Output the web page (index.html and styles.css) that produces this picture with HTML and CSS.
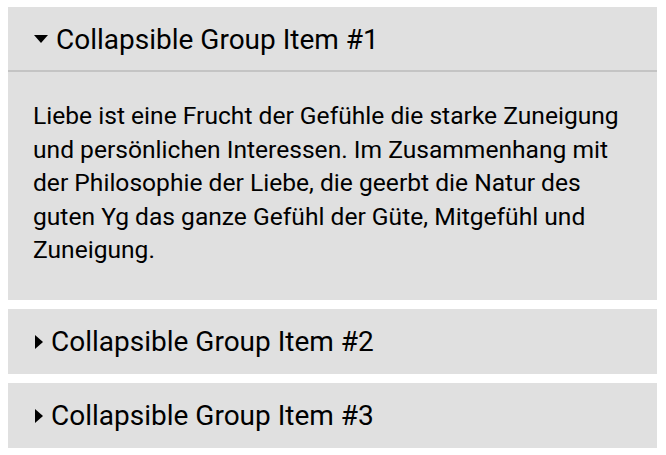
FILE: index.html
```html
<!DOCTYPE html>
<html>
<head>
<meta charset="utf-8">
<link rel="stylesheet" href="styles.css">
</head>
<body>
<div class="set">
  <div class="item open">
    <div class="head"><span class="tri down"></span>Collapsible Group Item #1</div>
    <div class="body">Liebe ist eine Frucht der Gefühle die starke Zuneigung und persönlichen Interessen. Im Zusammenhang mit der Philosophie der Liebe, die geerbt die Natur des guten Yg das ganze Gefühl der Güte, Mitgefühl und Zuneigung.</div>
  </div>
  <div class="item">
    <div class="head"><span class="tri right"></span>Collapsible Group Item #2</div>
  </div>
  <div class="item">
    <div class="head"><span class="tri right"></span>Collapsible Group Item #3</div>
  </div>
</div>
</body>
</html>
```
FILE: styles.css
```css
html, body { background: #fff; }
body {
  margin: 7px 9px 0 8px;
  font-family: Roboto, "Noto Sans", sans-serif;
  color: #000;
}
.set { display: flex; flex-direction: column; gap: 9px; }
.item { background: #e0e0e0; }
.head {
  height: 65px;
  display: flex;
  align-items: center;
  padding: 1px 0 0 26px;
  font-size: 28px;
  box-sizing: border-box;
}
.open .head { border-bottom: 2px solid #c4c4c4; }
.tri { display: inline-block; width: 0; height: 0; margin-right: 8px; }
.tri.down {
  border-left: 7px solid transparent;
  border-right: 7px solid transparent;
  border-top: 8px solid #000;
}
.tri.right {
  margin-left: 1px;
  border-top: 7px solid transparent;
  border-bottom: 7px solid transparent;
  border-left: 8px solid #000;
}
.body {
  padding: 27px 25px 33px 25px;
  font-size: 24.6px;
  line-height: 33.6px;
}
```
